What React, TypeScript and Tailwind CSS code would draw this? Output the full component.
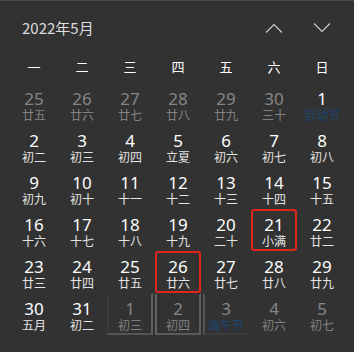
import React from "react";

type Day = {
  day: number;
  lunar: string;
  muted?: boolean;
  holiday?: boolean;
  marked?: boolean;
  reveal?: "left" | "mid" | "right";
};

const weekdays = ["一", "二", "三", "四", "五", "六", "日"];

const weeks: Day[][] = [
  [
    { day: 25, lunar: "廿五", muted: true },
    { day: 26, lunar: "廿六", muted: true },
    { day: 27, lunar: "廿七", muted: true },
    { day: 28, lunar: "廿八", muted: true },
    { day: 29, lunar: "廿九", muted: true },
    { day: 30, lunar: "三十", muted: true },
    { day: 1, lunar: "劳动节", holiday: true },
  ],
  [
    { day: 2, lunar: "初二" },
    { day: 3, lunar: "初三" },
    { day: 4, lunar: "初四" },
    { day: 5, lunar: "立夏" },
    { day: 6, lunar: "初六" },
    { day: 7, lunar: "初七" },
    { day: 8, lunar: "初八" },
  ],
  [
    { day: 9, lunar: "初九" },
    { day: 10, lunar: "初十" },
    { day: 11, lunar: "十一" },
    { day: 12, lunar: "十二" },
    { day: 13, lunar: "十三" },
    { day: 14, lunar: "十四" },
    { day: 15, lunar: "十五" },
  ],
  [
    { day: 16, lunar: "十六" },
    { day: 17, lunar: "十七" },
    { day: 18, lunar: "十八" },
    { day: 19, lunar: "十九" },
    { day: 20, lunar: "二十" },
    { day: 21, lunar: "小满", marked: true },
    { day: 22, lunar: "廿二" },
  ],
  [
    { day: 23, lunar: "廿三" },
    { day: 24, lunar: "廿四" },
    { day: 25, lunar: "廿五" },
    { day: 26, lunar: "廿六", marked: true },
    { day: 27, lunar: "廿七" },
    { day: 28, lunar: "廿八" },
    { day: 29, lunar: "廿九" },
  ],
  [
    { day: 30, lunar: "五月" },
    { day: 31, lunar: "初二" },
    { day: 1, lunar: "初三", muted: true, reveal: "left" },
    { day: 2, lunar: "初四", muted: true, reveal: "mid" },
    { day: 3, lunar: "端午节", muted: true, holiday: true, reveal: "right" },
    { day: 4, lunar: "初六", muted: true },
    { day: 5, lunar: "初七", muted: true },
  ],
];

// pointer-light edges around the hovered cells in the last row
const revealBorder: Record<string, string> = {
  left: "border-2 border-t-transparent border-l-[#3a3a3a] border-r-[#5e5e5e] border-b-[#555555]",
  mid: "border-2 border-t-transparent border-l-[#626262] border-r-[#5c5c5c] border-b-[#5a5a5a]",
  right: "border-2 border-t-transparent border-l-[#555555] border-r-transparent border-b-[#3c3c3c]",
};

function Chevron({ up }: { up?: boolean }) {
  return (
    <svg width="18" height="10" viewBox="0 0 18 10" fill="none">
      <path
        d={up ? "M1 9.5 L9 1.5 L17 9.5" : "M1 0.5 L9 8.5 L17 0.5"}
        stroke="#cfcfcf"
        strokeWidth="1.1"
      />
    </svg>
  );
}

function DayCell({ d }: { d: Day }) {
  let frame = "border-2 border-transparent";
  if (d.marked) frame = "border-2 border-[#e0251b] rounded-[3px]";
  else if (d.reveal) frame = revealBorder[d.reveal];

  const numColor = d.muted ? "text-[#868686]" : "text-white";
  const lunarColor = d.holiday
    ? "text-[#1b4673]"
    : d.muted
      ? "text-[#828282]"
      : "text-[#e4e4e4]";

  return (
    <div className={`h-[42px] mx-[1px] flex flex-col items-center pt-[5px] ${frame}`}>
      <span className={`text-[17px] leading-[18px] ${numColor}`}>{d.day}</span>
      <span
        className={`text-[12px] leading-[14px] ${lunarColor}`}
        style={{ fontFamily: '"Noto Sans CJK SC", sans-serif' }}
      >
        {d.lunar}
      </span>
    </div>
  );
}

export default function App() {
  return (
    <div
      className="w-[354px] h-[352px] bg-[#323232] border-t border-[#4c4c4c] overflow-hidden"
      style={{ fontFamily: '"Noto Sans", "Noto Sans CJK SC", sans-serif' }}
    >
      <div className="h-[54px] flex items-center justify-between pl-[22px] pr-[23px]">
        <span
          className="text-[15px] text-[#dcdcdc]"
          style={{ fontFamily: '"Noto Sans CJK SC", sans-serif' }}
        >
          2022年5月
        </span>
        <div className="flex items-center gap-[30px]">
          <Chevron up />
          <Chevron />
        </div>
      </div>

      <div className="px-[10px]">
        <div className="grid grid-cols-[repeat(7,48px)] h-[28px] items-center pb-[4px]">
          {weekdays.map((w) => (
            <span
              key={w}
              className="text-center text-[13px] text-white"
              style={{ fontFamily: '"Noto Sans CJK SC", sans-serif' }}
            >
              {w}
            </span>
          ))}
        </div>

        <div className="grid grid-cols-[repeat(7,48px)]">
          {weeks.flat().map((d, i) => (
            <DayCell key={i} d={d} />
          ))}
        </div>
      </div>
    </div>
  );
}
